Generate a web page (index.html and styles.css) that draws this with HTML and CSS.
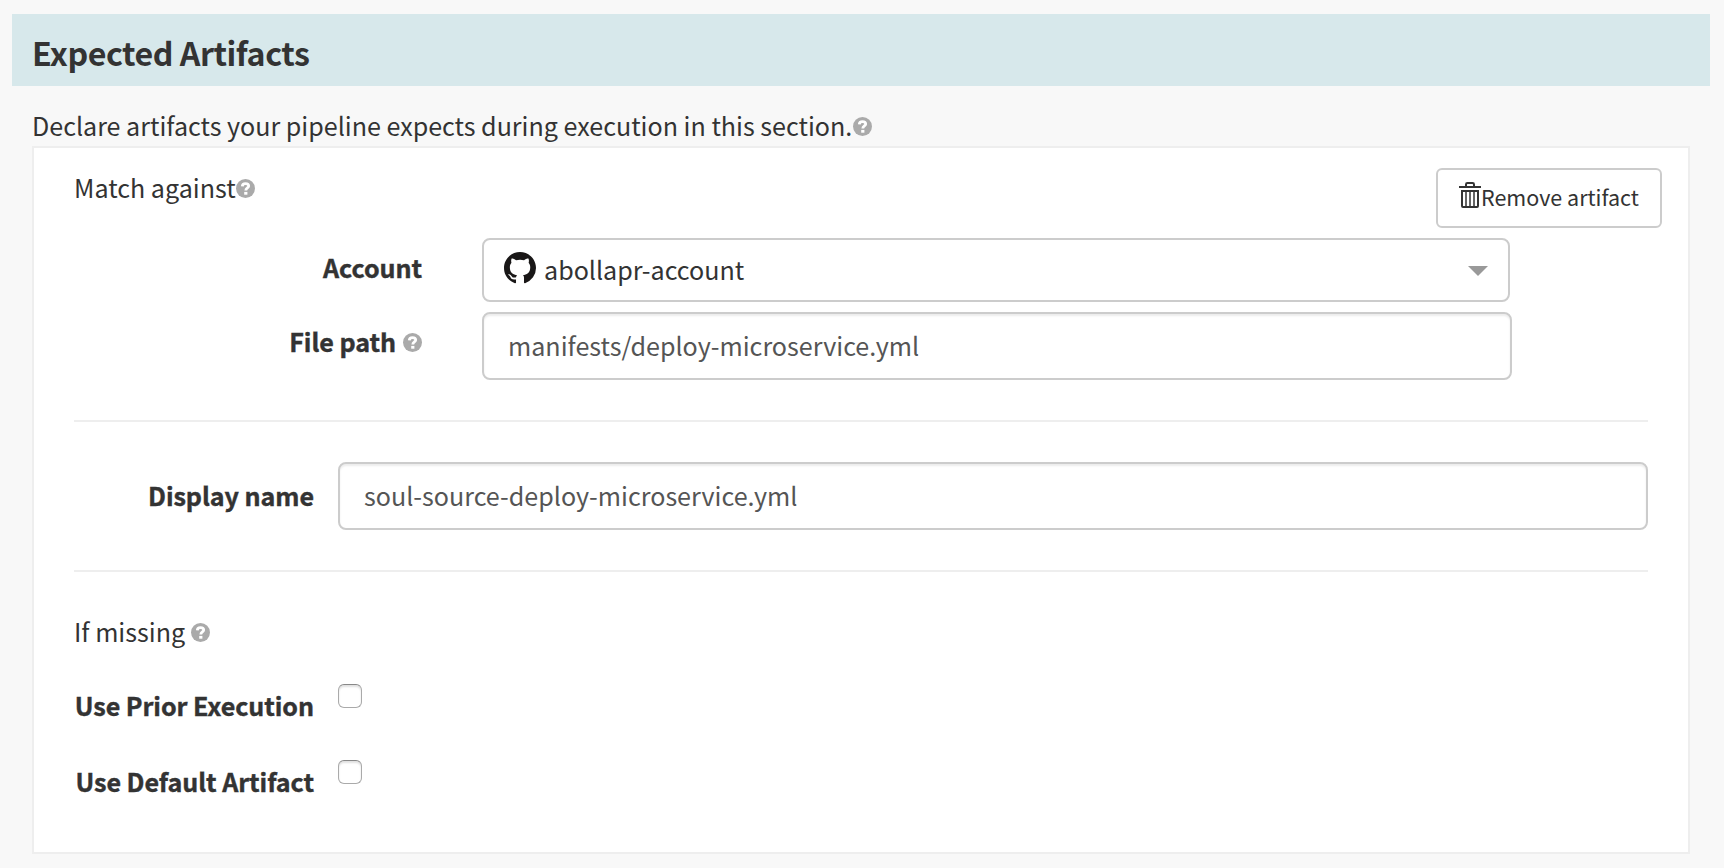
FILE: index.html
```html
<!DOCTYPE html>
<html lang="en">
<head>
<meta charset="utf-8">
<title>Expected Artifacts</title>
<link rel="stylesheet" href="styles.css">
</head>
<body>
<svg class="defs" width="0" height="0">
  <symbol id="help" viewBox="0 0 19 19">
    <circle cx="9.5" cy="9.5" r="9.5" fill="#aaa"/>
    <path class="mark" d="M6.300 7.400C6.400 5.300 7.600 4.600 9.500 4.600s3.200.8 3.200 2.400c0 2-2.900 1.900-2.900 4.500" stroke-width="2.800" fill="none"/>
    <rect class="dot" x="8.200" y="12.900" width="3.200" height="2.800"/>
  </symbol>
</svg>
<h3 class="heading">Expected Artifacts</h3>
<p class="intro"><span class="intro-text">Declare artifacts your pipeline expects during execution in this section.</span><svg class="help"><use href="#help"/></svg></p>
<section class="panel">
  <div class="top">
    <div class="match"><span class="match-text">Match against</span><svg class="help"><use href="#help"/></svg></div>
    <button class="remove" type="button">
      <svg class="trash" viewBox="0 0 22 26"><g fill="none" stroke="#333" stroke-width="2"><path d="M0 5h22M7 5V2.4Q7 1 8.400 1h5.200Q15 1 15 2.400V5"/><path d="M3 9h16V24q0 1-1 1H4q-1 0-1-1z"/><path d="M7 9v16M11 9v16M15 9v16" stroke-width="1.500"/></g></svg><span class="remove-text">Remove artifact</span>
    </button>
  </div>
  <div class="row">
    <label class="label"><span>Account</span></label>
    <div class="select">
      <svg class="github" viewBox="0 0 16 16"><path fill="#191717" d="M8 0C3.580 0 0 3.580 0 8c0 3.540 2.290 6.530 5.470 7.590.4.070.55-.17.55-.38 0-.19-.01-.82-.01-1.490-2.010.37-2.530-.49-2.690-.94-.09-.23-.48-.94-.82-1.130-.28-.15-.68-.52-.01-.53.63-.01 1.080.58 1.230.82.72 1.210 1.870.87 2.330.66.07-.52.28-.87.51-1.070-1.780-.2-3.640-.89-3.640-3.950 0-.87.31-1.590.82-2.150-.08-.2-.36-1.020.08-2.120 0 0 .67-.21 2.200.82.64-.18 1.320-.27 2-.27s1.360.09 2 .27c1.530-1.040 2.200-.82 2.200-.82.44 1.100.16 1.920.08 2.120.51.56.82 1.270.82 2.150 0 3.070-1.870 3.750-3.650 3.950.29.25.54.73.54 1.480 0 1.070-.01 1.930-.01 2.200 0 .21.15.46.55.38A8.010 8.010 0 0 0 16 8c0-4.420-3.580-8-8-8z"/></svg>
      <span class="select-text">abollapr-account</span>
      <span class="caret"></span>
    </div>
  </div>
  <div class="row">
    <label class="label"><span>File path</span><svg class="help"><use href="#help"/></svg></label>
    <div class="input path">manifests/deploy-microservice.yml</div>
  </div>
  <hr class="rule">
  <div class="row wide">
    <label class="label"><span>Display name</span></label>
    <div class="input name">soul-source-deploy-microservice.yml</div>
  </div>
  <hr class="rule">
  <div class="missing"><span>If missing</span><svg class="help"><use href="#help"/></svg></div>
  <div class="check"><label class="label">Use Prior Execution</label><span class="box"></span></div>
  <div class="check"><label class="label">Use Default Artifact</label><span class="box"></span></div>
</section>
</body>
</html>
```
FILE: styles.css
```css
* { box-sizing: border-box; }
body {
  margin: 0;
  padding: 14px 14px 0 12px;
  height: 868px;
  overflow: hidden;
  background: #f8f8f8;
  color: #333;
  font: 25.1px/40px "Noto Sans CJK SC", sans-serif;
  white-space: nowrap;
}
.defs { position: absolute; }
.heading {
  margin: 0;
  height: 72px;
  padding-left: 20px;
  background: #d7e8eb;
  font-size: 32.2px;
  line-height: 76px;
  font-weight: 700;
  letter-spacing: -.48px;
}
.help { display: block; flex: none; width: 19px; height: 19px; margin-top: 12px; }
.mark { stroke: #fff; }
.dot { fill: #fff; }
.intro { display: flex; margin: 19px 0 0; padding-left: 20px; height: 41px; }
.intro-text { width: 820.500px; letter-spacing: -.01px; }
.panel {
  margin: 0 20px;
  width: 1658px;
  height: 708px;
  padding: 0 40px;
  border: 2px solid #eee;
  background: #fff;
}
.top { display: flex; justify-content: space-between; align-items: flex-start; height: 90px; margin-right: -14px; }
.match { display: flex; margin-top: 19px; }
.match-text { width: 162px; }
.remove {
  display: flex;
  width: 226px;
  height: 60px;
  margin-top: 20px;
  padding: 12px 0 0 21px;
  border: 2px solid #ccc;
  border-radius: 6px;
  background: #fff;
  color: #333;
  font: 21.5px/32px "Noto Sans CJK SC", sans-serif;
  align-items: flex-start;
}
.trash { width: 22px; height: 26px; flex: none; }
.remove-text { margin-top: -1px; }
.row { display: grid; grid-template-columns: 348px 1030px; column-gap: 60px; margin-bottom: 10px; }
.label {
  display: flex;
  justify-content: flex-end;
  gap: 7px;
  margin-top: 9px;
  font-weight: 700;
  letter-spacing: -.06px;
  -webkit-text-stroke: .4px #333;
}
.select {
  display: flex;
  align-items: flex-start;
  width: 1028px;
  height: 64px;
  padding: 12px 20px 0;
  border: 2px solid #ccc;
  border-radius: 8px;
}
.github { width: 32px; height: 32px; margin-right: 8px; flex: none; }
.select-text { margin-top: -3px; }
.caret { margin: 14px 0 0 auto; border: 10px solid transparent; border-top-color: #999; border-bottom: 0; }
.input {
  height: 68px;
  padding: 11px 24px 0;
  border: 2px solid #ccc;
  border-radius: 8px;
  box-shadow: inset 0 2px 2px rgba(0, 0, 0, .075);
  color: #555;
}
.rule { height: 2px; margin: 40px 0; border: 0; background: #eee; }
.row:has(+ .rule) { margin-bottom: 0; }
.wide { grid-template-columns: 240px 1310px; column-gap: 24px; }
.wide .label { margin-top: 13px; }
.missing { display: flex; gap: 6px; margin-top: -1px; height: 73px; }
.check { display: grid; grid-template-columns: 240px 24px; column-gap: 24px; height: 76px; align-items: start; }
.check .label { margin-top: 1px; }
.box {
  width: 24px;
  height: 24px;
  border: 1px solid #aaa;
  border-top-color: #888;
  border-radius: 6px;
  box-shadow: inset 0 2px 2px rgba(0, 0, 0, .12);
}
```
